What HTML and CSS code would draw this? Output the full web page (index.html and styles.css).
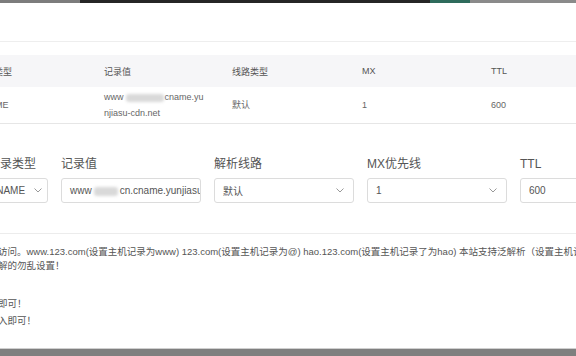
FILE: index.html
```html
<!DOCTYPE html>
<html lang="zh-CN">
<head>
  <meta charset="UTF-8">
  <title>添加解析记录</title>
  <link rel="stylesheet" href="styles.css">
</head>
<body>

  <div class="backdrop-strip">
    <span class="seg seg-grey"></span>
    <span class="seg seg-dark"></span>
    <span class="seg seg-green"></span>
    <span class="seg seg-light"></span>
  </div>

  <div class="modal">
    <div class="modal-head"></div>

    <div class="wrap">
      <div class="record-table">
        <div class="tr th">
          <div>记录类型</div>
          <div>记录值</div>
          <div>线路类型</div>
          <div>MX</div>
          <div>TTL</div>
        </div>
        <div class="tr td">
          <div>CNAME</div>
          <div>www<span class="blur blur-table"></span>cname.yu<br>njiasu-cdn.net</div>
          <div>默认</div>
          <div>1</div>
          <div>600</div>
        </div>
      </div>

      <form class="record-form">
        <div class="field field-type">
          <label>记录类型</label>
          <div class="control">
            <span>CNAME</span>
            <svg class="chev" width="8" height="5" viewBox="0 0 8 5"><path d="M0.5 0.5 L4 4 L7.5 0.5" fill="none" stroke="#999" stroke-width="1"/></svg>
          </div>
        </div>
        <div class="field">
          <label>记录值</label>
          <div class="control">
            <span>www<span class="blur blur-input"></span>cn.cname.yunjiasu</span>
          </div>
        </div>
        <div class="field">
          <label>解析线路</label>
          <div class="control">
            <span>默认</span>
            <svg class="chev" width="8" height="5" viewBox="0 0 8 5"><path d="M0.5 0.5 L4 4 L7.5 0.5" fill="none" stroke="#999" stroke-width="1"/></svg>
          </div>
        </div>
        <div class="field">
          <label>MX优先线</label>
          <div class="control">
            <span>1</span>
            <svg class="chev" width="8" height="5" viewBox="0 0 8 5"><path d="M0.5 0.5 L4 4 L7.5 0.5" fill="none" stroke="#999" stroke-width="1"/></svg>
          </div>
        </div>
        <div class="field">
          <label>TTL</label>
          <div class="control">
            <span>600</span>
          </div>
        </div>
      </form>

      <div class="notes">
        <p>访问。www.123.com(设置主机记录为www) 123.com(设置主机记录为@) hao.123.com(设置主机记录了为hao) 本站支持泛解析（设置主机记录为*）<br>解的勿乱设置！</p>
        <p>即可！<br>入即可！</p>
      </div>
    </div>
  </div>

</body>
</html>
```

FILE: styles.css
```css
body {
  margin: 0;
  height: 356px;
  overflow: hidden;
  background: #7f7f7f;
  font-family: "Liberation Sans", "Noto Sans CJK SC", sans-serif;
  color: #555;
}

.backdrop-strip {
  display: flex;
  height: 3px;
}

.seg {
  display: block;
  height: 100%;
}

.seg-grey { width: 80px; background: #7c7c7c; }
.seg-dark { width: 350px; background: #262626; }
.seg-green { width: 40px; background: #2f6b5c; }
.seg-light { flex: 1; background: #8a8a8a; }

.modal {
  background: #fff;
  height: 345px;
  border-bottom: 1px solid #cfcfcf;
  overflow: hidden;
}

.modal-head {
  height: 38px;
  border-bottom: 1px solid #eeeeee;
}

.wrap {
  margin-left: -30px;
  width: 660px;
  padding-top: 13px;
}

/* table */
.record-table {
  border-bottom: 1px solid #e6e6e6;
  font-size: 9px;
}

.tr {
  display: grid;
  grid-template-columns: 122px 128px 130px 129px 1fr;
  align-items: center;
}

.tr > div {
  padding-left: 12px;
}

.tr > div:first-child {
  padding-left: 6px;
}

.th {
  height: 32px;
  background: #f6f6f8;
  color: #555;
}

.td {
  height: 36px;
  line-height: 16px;
  color: #666;
}

.td > div:first-child {
  padding-left: 6px;
}

.blur {
  display: inline-block;
  background: #d9d9d9;
  border-radius: 3px;
  filter: blur(1.5px);
  vertical-align: middle;
}

.blur-table {
  width: 38px;
  height: 8px;
  margin: 0 1px 0 2px;
}

.blur-input {
  width: 24px;
  height: 9px;
  margin: 0 2px;
}

/* form */
.record-form {
  display: flex;
  gap: 13px;
  padding-left: 18px;
  margin-top: 31px;
  padding-bottom: 30px;
  border-bottom: 1px solid #ececec;
}

.field {
  width: 140px;
  flex-shrink: 0;
}

.field-type {
  width: 60px;
}

.field label {
  display: block;
  font-size: 12px;
  line-height: 18px;
  color: #555;
  margin-bottom: 5px;
}

.control {
  display: flex;
  align-items: center;
  justify-content: space-between;
  height: 23px;
  border: 1px solid #dcdcdc;
  border-radius: 3px;
  padding: 0 9px 0 8px;
  font-size: 10px;
  color: #555;
  white-space: nowrap;
  overflow: hidden;
}

.field-type .control {
  justify-content: flex-start;
  gap: 9px;
  padding-left: 0;
}

.chev {
  flex-shrink: 0;
}

/* notes */
.notes {
  padding: 11px 0 0 28px;
  font-size: 9.5px;
  line-height: 14px;
  color: #555;
  white-space: nowrap;
}

.notes p {
  margin: 0 0 22px;
}

.notes p + p {
  line-height: 17px;
}
```
